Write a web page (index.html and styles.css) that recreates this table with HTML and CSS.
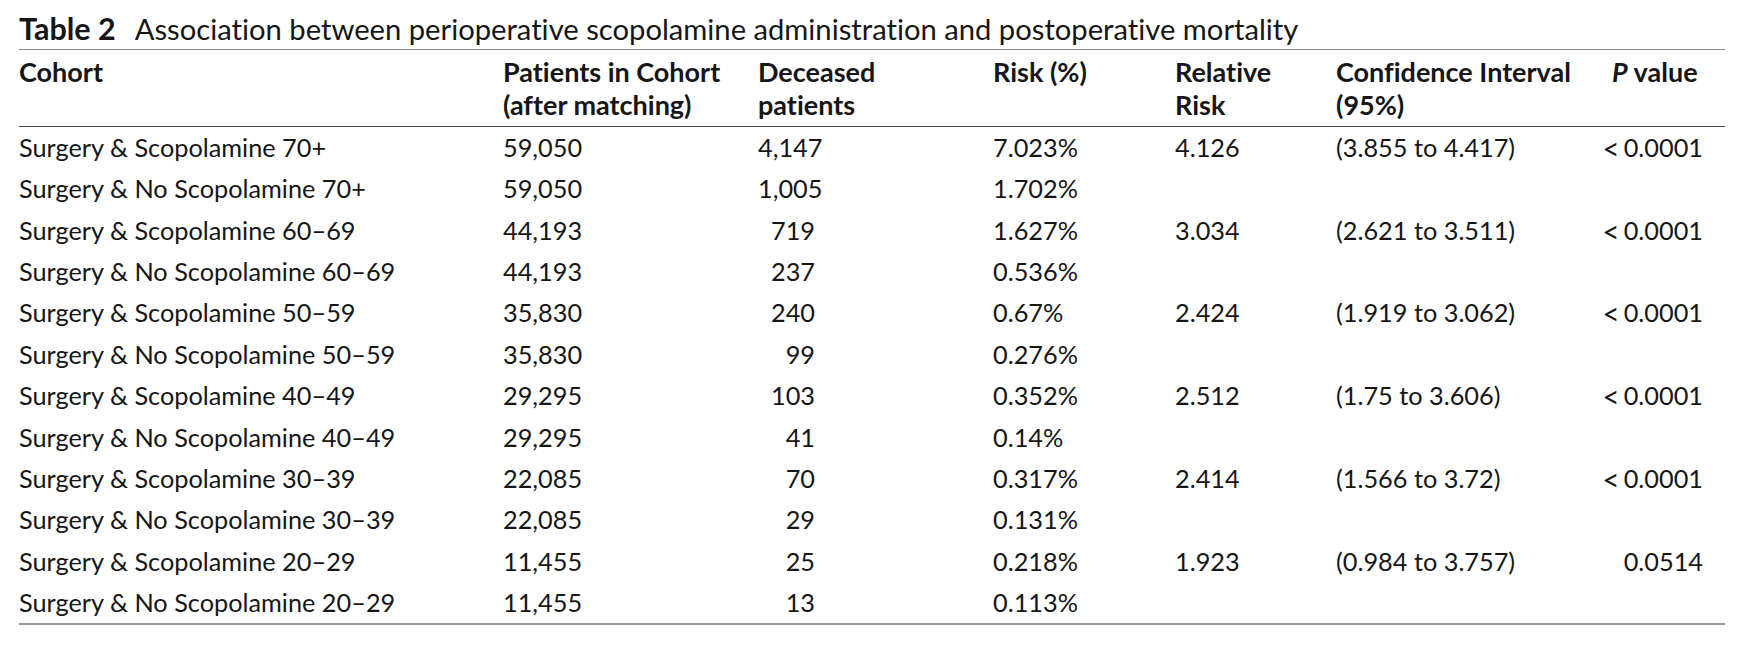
FILE: index.html
```html
<!DOCTYPE html>
<html lang="en">
<head>
<meta charset="utf-8">
<title>Table 2</title>
<link rel="stylesheet" href="styles.css">
</head>
<body>
<div class="page">
  <div class="caption"><span class="label">Table 2</span><span class="caption-text">Association between perioperative scopolamine administration and postoperative mortality</span></div>
  <table class="data">
    <colgroup>
      <col class="c-cohort"><col class="c-patients"><col class="c-deceased"><col class="c-risk"><col class="c-rr"><col class="c-ci"><col class="c-p">
    </colgroup>
    <thead>
      <tr>
        <th>Cohort</th>
        <th>Patients in Cohort<br>(after matching)</th>
        <th>Deceased<br>patients</th>
        <th>Risk (%)</th>
        <th>Relative<br>Risk</th>
        <th>Confidence Interval<br>(95%)</th>
        <th><i>P</i> value</th>
      </tr>
    </thead>
    <tbody>
      <tr><td>Surgery &amp; Scopolamine 70+</td><td>59,050</td><td><span class="num">4,147</span></td><td>7.023%</td><td>4.126</td><td>(3.855 to 4.417)</td><td class="p"><div class="pv"><span><span class="lt">&lt;</span>0.0001</span></div></td></tr>
      <tr><td>Surgery &amp; No Scopolamine 70+</td><td>59,050</td><td><span class="num">1,005</span></td><td>1.702%</td><td></td><td></td><td class="p"></td></tr>
      <tr><td>Surgery &amp; Scopolamine 60–69</td><td>44,193</td><td><span class="num">719</span></td><td>1.627%</td><td>3.034</td><td>(2.621 to 3.511)</td><td class="p"><div class="pv"><span><span class="lt">&lt;</span>0.0001</span></div></td></tr>
      <tr><td>Surgery &amp; No Scopolamine 60–69</td><td>44,193</td><td><span class="num">237</span></td><td>0.536%</td><td></td><td></td><td class="p"></td></tr>
      <tr><td>Surgery &amp; Scopolamine 50–59</td><td>35,830</td><td><span class="num">240</span></td><td>0.67%</td><td>2.424</td><td>(1.919 to 3.062)</td><td class="p"><div class="pv"><span><span class="lt">&lt;</span>0.0001</span></div></td></tr>
      <tr><td>Surgery &amp; No Scopolamine 50–59</td><td>35,830</td><td><span class="num">99</span></td><td>0.276%</td><td></td><td></td><td class="p"></td></tr>
      <tr><td>Surgery &amp; Scopolamine 40–49</td><td>29,295</td><td><span class="num">103</span></td><td>0.352%</td><td>2.512</td><td>(1.75 to 3.606)</td><td class="p"><div class="pv"><span><span class="lt">&lt;</span>0.0001</span></div></td></tr>
      <tr><td>Surgery &amp; No Scopolamine 40–49</td><td>29,295</td><td><span class="num">41</span></td><td>0.14%</td><td></td><td></td><td class="p"></td></tr>
      <tr><td>Surgery &amp; Scopolamine 30–39</td><td>22,085</td><td><span class="num">70</span></td><td>0.317%</td><td>2.414</td><td>(1.566 to 3.72)</td><td class="p"><div class="pv"><span><span class="lt">&lt;</span>0.0001</span></div></td></tr>
      <tr><td>Surgery &amp; No Scopolamine 30–39</td><td>22,085</td><td><span class="num">29</span></td><td>0.131%</td><td></td><td></td><td class="p"></td></tr>
      <tr><td>Surgery &amp; Scopolamine 20–29</td><td>11,455</td><td><span class="num">25</span></td><td>0.218%</td><td>1.923</td><td>(0.984 to 3.757)</td><td class="p"><div class="pv"><span>0.0514</span></div></td></tr>
      <tr><td>Surgery &amp; No Scopolamine 20–29</td><td>11,455</td><td><span class="num">13</span></td><td>0.113%</td><td></td><td></td><td class="p"></td></tr>
    </tbody>
  </table>
</div>
</body>
</html>
```
FILE: styles.css
```css
html, body {
  margin: 0;
  padding: 0;
  background: #ffffff;
}

.page {
  padding: 11px 17px 0 19px;
  width: 1706px;
  font-family: "Lato", "Noto Sans", sans-serif;
  color: #161616;
  font-variant-ligatures: none;
  font-feature-settings: "liga" 0, "clig" 0;
}

.caption {
  display: flex;
  align-items: baseline;
  font-size: 29.2px;
  line-height: 34px;
  padding-bottom: 3px;
  border-bottom: 1px solid #8e8e8e;
  white-space: nowrap;
}

.label {
  font-weight: 700;
  font-size: 30.5px;
  margin-right: 19px;
}

.caption-text {
  font-weight: 400;
}

.data {
  width: 1706px;
  table-layout: fixed;
  border-collapse: collapse;
  border-spacing: 0;
}

.c-cohort { width: 484px; }
.c-patients { width: 255px; }
.c-deceased { width: 235px; }
.c-risk { width: 182px; }
.c-rr { width: 161px; }
.c-ci { width: 276px; }
.c-p { width: 113px; }

.data th {
  text-align: left;
  vertical-align: top;
  font-weight: 700;
  font-size: 27px;
  line-height: 33px;
  padding: 5px 0 5px 0;
  border-bottom: 1px solid #4a4a4a;
  white-space: nowrap;
}

.data td {
  text-align: left;
  vertical-align: top;
  font-weight: 400;
  font-size: 25.3px;
  line-height: 41.36px;
  height: 41.36px;
  padding: 0;
  white-space: nowrap;
}

.data tbody tr:last-child td {
  border-bottom: 2px solid #9a9a9a;
}

.num {
  display: inline-block;
  width: 57px;
  text-align: right;
}

.data td.p {
  padding-right: 22px;
}

.pv {
  display: flex;
  justify-content: flex-end;
  height: 41.36px;
}

.lt {
  font-size: 30px;
  line-height: 0;
  vertical-align: -3px;
  margin-right: 4px;
}
```
